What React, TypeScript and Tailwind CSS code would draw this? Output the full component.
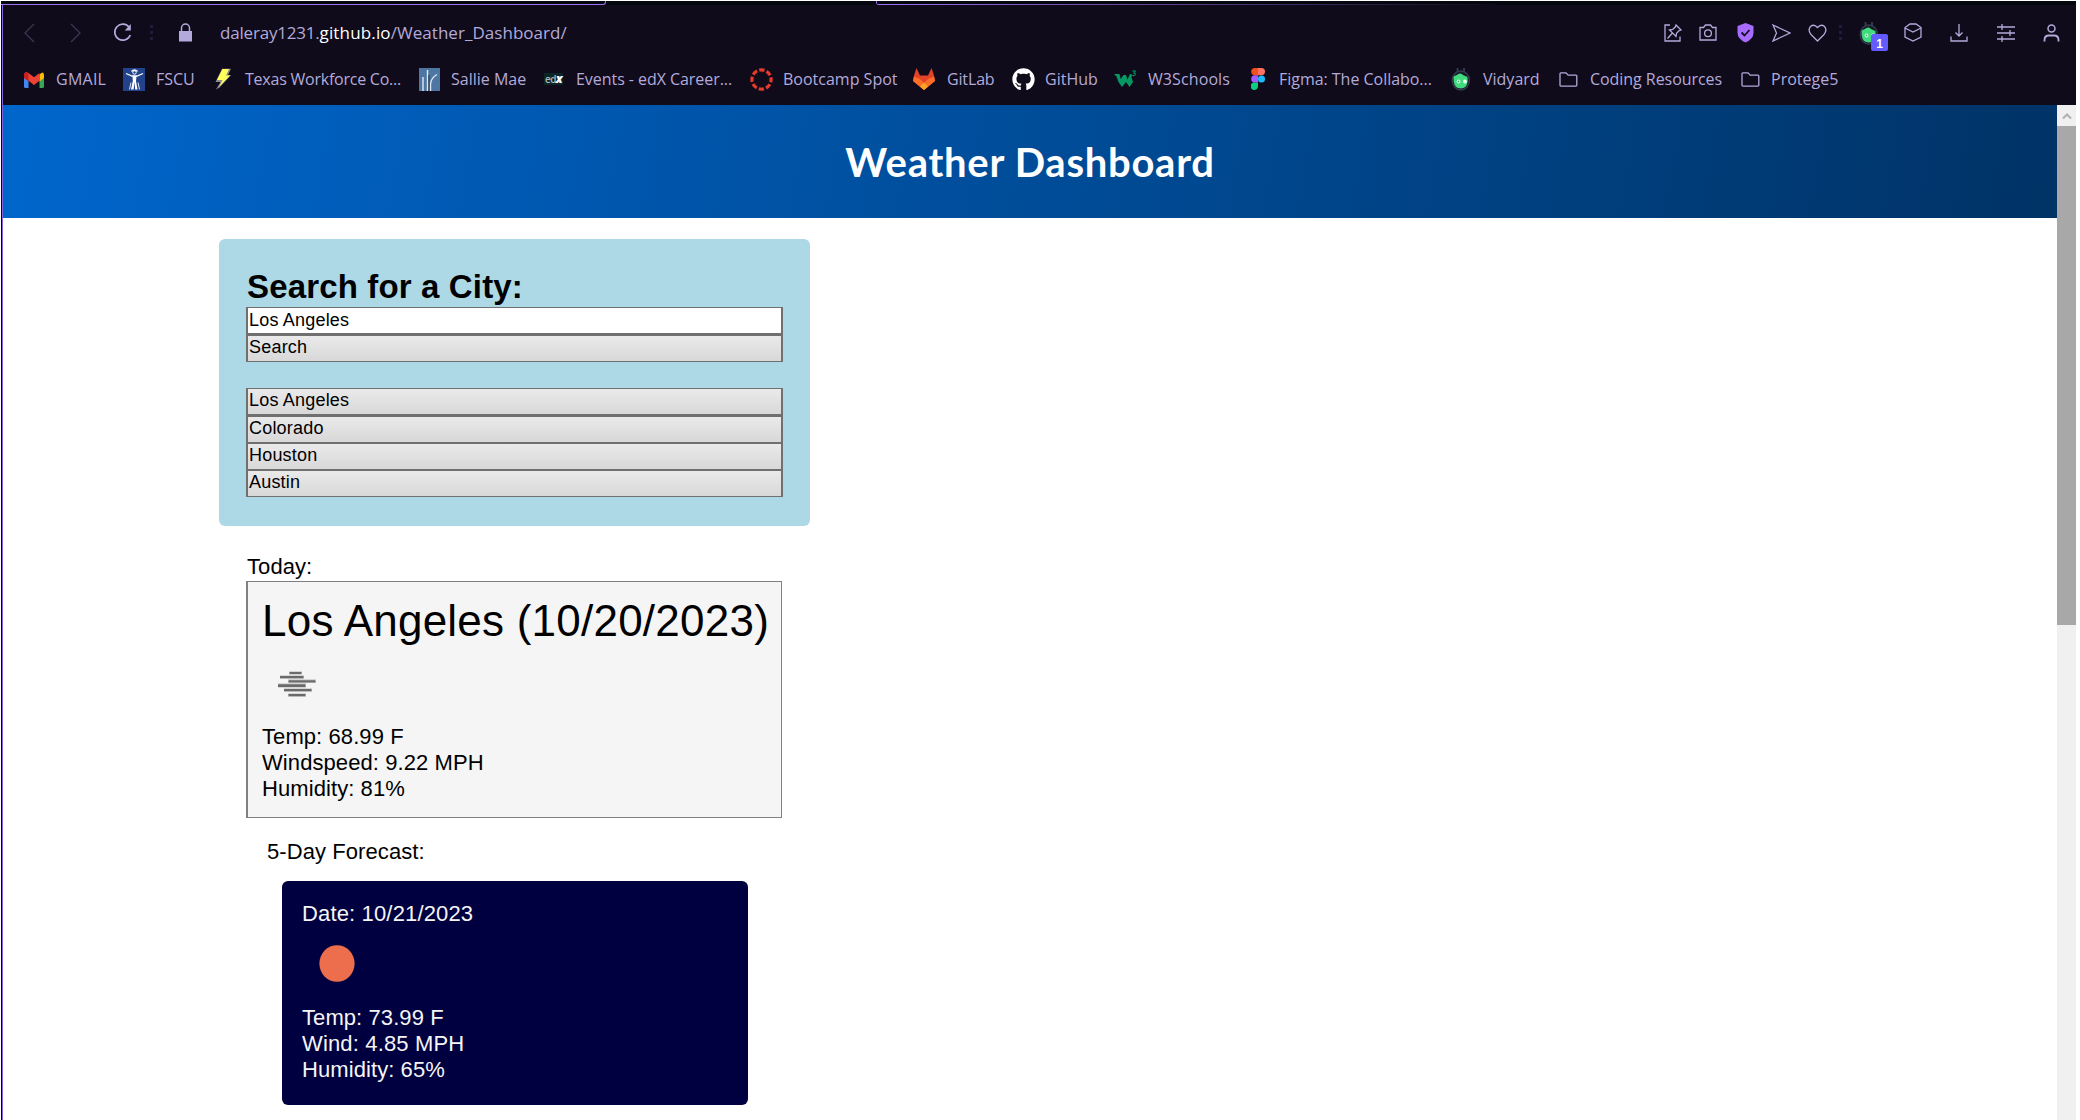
import type { ReactNode } from "react";
import { FaGithub } from "react-icons/fa";

function Icon({ w, h, className = "", children }: { w: number; h: number; className?: string; children: ReactNode }) {
  return (
    <svg width={w} height={h} viewBox={`0 0 ${w} ${h}`} fill="none" stroke="currentColor" strokeWidth="1.3" className={`shrink-0 ${className}`}>
      {children}
    </svg>
  );
}

function Dots({ className }: { className: string }) {
  return (
    <div className={`flex w-[3px] shrink-0 flex-col gap-[3px] ${className}`}>
      <i className="h-[3px] bg-[#221c3c]" />
      <i className="h-[3px] bg-[#221c3c]" />
      <i className="h-[3px] bg-[#221c3c]" />
    </div>
  );
}

function Bug() {
  return (
    <Icon w={20} h={24}>
      <path d="M6.500 1v4M13 1v4" stroke="#3c4359" strokeWidth="1.600" />
      <ellipse cx="9.800" cy="13.500" rx="8.600" ry="9.500" stroke="#363c50" strokeWidth="1.300" fill="#141a26" />
      <path d="M2.500 10q1-1.500 3-1.800 2-2 4.500-1.700 1.500 1.500 6.500 3.500l.2 4.500q-1 7-7 7t-7-7z" fill="#41db7e" stroke="none" />
      <circle cx="7.600" cy="14.500" r="1.900" fill="#c9f7db" stroke="none" />
      <circle cx="14" cy="14.500" r="1.900" fill="#e9fff1" stroke="none" />
      <circle cx="7.600" cy="14.500" r=".8" fill="#2f9e62" stroke="none" />
    </Icon>
  );
}

function Folder() {
  return (
    <Icon w={19} h={15}>
      <path d="M1 13.300V1.700q0-.9.900-.9h5.100l2.200 2.400h7.700q.9 0 .9.900v9.200q0 .8-.9.800H1.900q-.9 0-.9-.8z" />
    </Icon>
  );
}

const bookmarks: { label: string; slot: string; box: string; text?: string; icon: ReactNode }[] = [
  {
    label: "GMAIL", slot: "w-[99px]", box: "w-[32px]", text: "tracking-[0.25px]",
    icon: (
      <Icon w={20} h={16} className="mt-px">
        <path d="M0 3.500h4.500V16H1.500Q0 16 0 14.500z" fill="#4285f4" stroke="none" />
        <path d="M15.500 3.500H20v11q0 1.500-1.500 1.500h-3z" fill="#34a853" stroke="none" />
        <path d="M15.500 2.500q4.500-4.500 4.500 1V6l-4.500 3.500z" fill="#fbbc04" stroke="none" />
        <path d="M0 6V2.500Q.8-1.200 4.500 1L10 5.200 15.500 1v7.800L10 13 4.500 8.800z" fill="#ea4335" stroke="none" />
        <path d="M0 6V2.500Q.8-1.200 4.500 1v8.200z" fill="#c5221f" stroke="none" />
      </Icon>
    ),
  },
  {
    label: "FSCU", slot: "w-[91px]", box: "w-[33px]",
    icon: (
      <Icon w={22} h={23}>
        <path d="M0 0h22v23H0z" fill="#22428c" stroke="none" />
        <circle cx="11.500" cy="4.500" r="1.700" stroke="#fff" strokeWidth="1" />
        <path d="M8.500 3.500q3-3 6 0M3 5.500l6 2.500h5l6-2.500" stroke="#fff" strokeWidth="1.300" />
        <path d="M9.500 8h4l-.5 5 1.500 8.500h-2.300L11.500 14l-.9 7.500H8L9.800 13z" fill="#fff" stroke="none" />
        <path d="M6.500 21.500l1.500-7M16.500 21.500l-1.500-7" stroke="#dfe6f5" strokeWidth="1" />
      </Icon>
    ),
  },
  {
    label: "Texas Workforce Co...", slot: "w-[205px]", box: "w-[31px]", text: "tracking-[-0.23px]",
    icon: (
      <Icon w={18} h={22}>
        <path d="M8 .8h9L14 7h3.200L5.500 19.500 2 21.500 6.500 14H1.500z" fill="#8d8c90" stroke="none" />
        <path d="M8.500 1H15l-3 6.500h4L5 19l3.500-7H3z" fill="#ffff5a" stroke="none" />
      </Icon>
    ),
  },
  {
    label: "Sallie Mae", slot: "w-[125px]", box: "w-[32px]",
    icon: (
      <Icon w={21} h={23}>
        <path d="M0 0h21v23H0z" fill="#4e76a2" stroke="none" />
        <path d="M4 9v14M8.500 2v21M11.500 23V16Q12 10 18 6.500" stroke="#dfe8f2" strokeWidth="1.400" />
        <path d="M10 7v16" stroke="#22303f" strokeWidth="1" />
      </Icon>
    ),
  },
  {
    label: "Events - edX Career...", slot: "w-[206px]", box: "w-[32px]", text: "tracking-[-0.05px]",
    icon: (
      <span className="flex h-[12px] w-[19px] items-center justify-center bg-[#0c2426] font-['Open_Sans'] text-[10px] font-semibold tracking-[-0.6px] text-[#a9bab8]">
        ed<b className="text-[12px] text-white italic">x</b>
      </span>
    ),
  },
  {
    label: "Bootcamp Spot", slot: "w-[163px]", box: "w-[33px]",
    icon: (
      <Icon w={23} h={23}>
        <circle cx="11.500" cy="11.500" r="9.600" stroke="#e63b2c" strokeWidth="3.200" strokeDasharray="5.340 2.200" strokeDashoffset="2.600" />
        <circle cx="11.500" cy="11.500" r="6.600" stroke="#5a1b1d" strokeWidth=".8" strokeDasharray="1 4.200" />
      </Icon>
    ),
  },
  {
    label: "GitLab", slot: "w-[99px]", box: "w-[34px]", text: "tracking-[-0.15px]",
    icon: (
      <Icon w={22} h={22}>
        <path d="M3.500 0L1 7.500 0 13l11 9 11-9-1-5.500L18.500 0 15 7.500H7z" fill="#e24329" stroke="none" />
        <path d="M1 8.500L0 13l11 9 11-9-1-4.500-6 2.500-4 4-4-4z" fill="#fc6d26" stroke="none" />
        <path d="M11 14.500L7 18.500l4 3.500 4-3.500z" fill="#fca326" stroke="none" />
      </Icon>
    ),
  },
  { label: "GitHub", slot: "w-[102px]", box: "w-[33px]", icon: <FaGithub size={23} color="#fff" /> },
  {
    label: "W3Schools", slot: "w-[137px]", box: "w-[34px]", text: "tracking-[0.1px]",
    icon: (
      <Icon w={23} h={18}>
        <path d="M0 4h5.500l1.200 5L9.500 5h2.500l1.500 4.500L16 4l2 .5-.5 3L19 12l-3.500 5-3.500-5-4 5L4.500 12 2.500 6.500z" fill="#059862" stroke="none" />
        <path d="M18.300 1h3L20 3q2 .4 1 2-.9 1-2.700.3" stroke="#059862" strokeWidth="1.100" />
      </Icon>
    ),
  },
  {
    label: "Figma: The Collabo...", slot: "w-[200px]", box: "w-[28px]", text: "tracking-[-0.03px]",
    icon: (
      <Icon w={14} h={22}>
        <path d="M7 0H3.800a3.600 3.600 0 0 0 0 7.200H7z" fill="#f24e1e" stroke="none" />
        <path d="M7 0h3.400a3.600 3.600 0 0 1 0 7.200H7z" fill="#ff7262" stroke="none" />
        <path d="M7 7.300H3.800a3.600 3.600 0 0 0 0 7.200H7z" fill="#a259ff" stroke="none" />
        <circle cx="10.500" cy="10.900" r="3.500" fill="#1abcfe" stroke="none" />
        <path d="M7 14.600H3.800A3.700 3.700 0 1 0 7 18.300z" fill="#0acf83" stroke="none" />
      </Icon>
    ),
  },
  { label: "Vidyard", slot: "w-[108px]", box: "w-[32px]", icon: <Bug /> },
  { label: "Coding Resources", slot: "w-[182px]", box: "w-[31px]", text: "tracking-[-0.05px]", icon: <Folder /> },
  { label: "Protege5", slot: "w-[110px]", box: "w-[30px]", icon: <Folder /> },
];

function AddressBar() {
  return (
    <div className="flex h-[55px] items-center pr-4 pl-[21px] text-[#b3aadb]">
      <Icon w={11} h={20} className="text-[#3c3650]"><path d="M10 1L1 10l9 9" /></Icon>
      <Icon w={11} h={20} className="ml-[35px] text-[#3c3650]"><path d="M1 1l9 9-9 9" /></Icon>
      <Icon w={19} h={19} className="ml-[32px]">
        <path d="M16.300 4.500A8 8 0 1 0 17.300 12" strokeWidth="1.700" />
        <path d="M17.800 1v6.500h-6z" fill="currentColor" stroke="none" />
      </Icon>
      <Dots className="ml-[18px]" />
      <Icon w={13} h={19} className="ml-[26px]">
        <path d="M2.500 9V5a4 4 0 0 1 8 0v4" strokeWidth="1.500" />
        <path d="M0 8h13v10.500H0z" fill="currentColor" stroke="none" />
      </Icon>
      <span className="mt-px ml-[28px] font-['Open_Sans'] text-[17px] whitespace-nowrap">
        <span className="tracking-[-0.2px]">daleray1231.</span>
        <span className="tracking-[0.15px] text-white">github.io</span>
        <span className="tracking-[0.04px]">/Weather_Dashboard/</span>
      </span>
      <div className="ml-auto flex items-center">
        <Icon w={18} h={18}>
          <path d="M6 1H1v16h15v-4.500" />
          <path d="M12 1l5 5-1.800.6-2.700 2.700-.5 3.200L5.500 6l3.200-.5 2.700-2.700zM8.500 9L3.500 14.500" />
        </Icon>
        <Icon w={18} h={17} className="ml-[17px]">
          <path d="M1 3.500h3.500L6.500 1h5l2 2.500H17V16H1z" />
          <circle cx="9" cy="9.300" r="3.400" />
        </Icon>
        <Icon w={17} h={20} className="ml-5">
          <path d="M8.500 0l8 3v6.500q0 6.500-8 10-8-3.500-8-10V3z" fill="#a76cff" stroke="none" />
          <path d="M4.500 9.500l3 3 5-5.500" stroke="#120d20" strokeWidth="1.800" />
        </Icon>
        <Icon w={19} h={18} className="ml-[18px]"><path d="M1 1l17 8-17 8 3.500-8z" /></Icon>
        <Icon w={19} h={18} className="ml-[17px]">
          <path d="M9.500 17L3 10.500Q-.5 6 2.500 2.500q3.500-3 7 1 3.500-4 7-1 3 3.500-.5 8z" />
        </Icon>
        <Dots className="ml-[12px]" />
        <div className="relative ml-[17px] flex">
          <Bug />
          <span className="absolute top-[13px] left-[12px] flex h-[17px] w-[17px] items-center justify-center rounded-[2px] bg-[#635bff] pt-[3px] font-['Liberation_Sans'] text-[12px] font-bold text-white">1</span>
        </div>
        <Icon w={18} h={19} className="ml-[25px]">
          <path d="M6 1h6l5 3.500v9.500L9 18l-8-4V4.500z" />
          <path d="M1 5l8 4 8-4" />
        </Icon>
        <Icon w={18} h={18} className="ml-7 mt-px">
          <path d="M9 0v12M5.500 8.500L9 12l3.500-3.500M1 12.500V17h16v-4.500" />
        </Icon>
        <Icon w={18} h={18} className="ml-[29px]">
          <path d="M0 3h18M0 9h18M0 15h18M5 0v6M13 6v6M5 12v6" />
        </Icon>
        <Icon w={17} h={18} className="ml-[28px]">
          <circle cx="8.500" cy="4.500" r="3.500" strokeWidth="1.500" />
          <path d="M1.500 17.500V16q0-4.500 4.500-4.500h5q4.500 0 4.500 4.500v1.500" strokeWidth="1.800" />
        </Icon>
      </div>
    </div>
  );
}

function BookmarksBar() {
  return (
    <div className="flex h-[38px] items-center pl-[21px] text-[#b3aadb]">
      {bookmarks.map((b) => (
        <div key={b.label} className={`flex shrink-0 items-center ${b.slot}`}>
          <span className={`flex shrink-0 items-center ${b.box}`}>{b.icon}</span>
          <span className={`font-['Open_Sans'] text-[16px] leading-[22px] whitespace-nowrap ${b.text ?? ""}`}>{b.label}</span>
        </div>
      ))}
    </div>
  );
}

const bar = "block w-full border-[#707070] border-x-2 text-left pl-px text-[18px] tracking-[0.2px] text-black";
const grad = "bg-linear-to-b from-[#eaeaea] to-[#d8d8d8] leading-[22px] pb-[3px]";

function SearchPanel() {
  return (
    <section className="h-[287px] w-[591px] rounded-[6px] bg-[#add8e6] px-[27px] pt-[28px]">
      <h2 className="mb-px pl-px text-[33px] leading-[39px] font-bold tracking-[0.15px]">Search for a City:</h2>
      <input defaultValue="Los Angeles" className={`${bar} h-[28px] border-t border-b-2 bg-white leading-[24px]`} />
      <button className={`${bar} ${grad} h-[27px] border-y`}>Search</button>
      <div className="mt-[26px]">
        <button className={`${bar} ${grad} h-[28px] border-t border-b-2`}>Los Angeles</button>
        <button className={`${bar} ${grad} h-[27px] border-y`}>Colorado</button>
        <button className={`${bar} ${grad} h-[27px] border-y`}>Houston</button>
        <button className={`${bar} ${grad} h-[27px] border-y`}>Austin</button>
      </div>
    </section>
  );
}

function Mist() {
  return (
    <svg width="38" height="26" viewBox="0 0 38 26" className="mt-[25px] ml-4">
      <g fill="#d6d6d6">
        <path d="M11 0h13v4H11zM2 4h24v4H2zM10 8h28v4H10zM0 12h28v5H0zM6 17h28v4H6zM10 22h18v4H10z" />
      </g>
      <g fill="#6a6a6a">
        <path d="M11.500 1h12v2h-12zM2 5h23.500v2.200H2zM10.500 9.300h27v2.200h-27zM0 13.300h27.500v2.700H0zM6 18h27.500v2.200H6zM10.500 23h17v2.200h-17z" />
      </g>
    </svg>
  );
}

export default function App() {
  return (
    <div className="h-[1120px] overflow-hidden bg-white font-['Liberation_Sans',sans-serif] text-black">
      <div className="flex h-full w-[2076px] flex-col pt-px pl-px">
        <div className="flex h-[4px] shrink-0 bg-[#04070d]">
          <i className="h-[4px] w-[605px] rounded-br-[3px] border-r border-b border-[#a070f5]" />
          <i className="ml-[270px] h-[4px] w-[620px] rounded-bl-[3px] border-l border-[#a070f5] bg-[linear-gradient(to_right,#a070f5,#0f0b1a)] bg-[length:100%_1px] bg-bottom bg-no-repeat" />
        </div>
        <div className="flex min-h-0 grow border-l border-black">
          <div className="flex grow flex-col border-l border-[#8a5fe0]">
            <div className="h-[100px] shrink-0 bg-[#0f0b1a]">
              <AddressBar />
              <BookmarksBar />
            </div>
            <div className="flex min-h-0 grow">
              <div className="flex w-[2054px] flex-col">
                <header className="flex h-[113px] shrink-0 items-center justify-center bg-[linear-gradient(100deg,#0066cc,#003366)]">
                  <h1 className="font-['Lato'] text-[40px] leading-[48px] font-bold tracking-[0.73px] text-white">Weather Dashboard</h1>
                </header>
                <main className="pt-[21px] pl-[216px]">
                  <SearchPanel />
                  <section className="ml-[27px] w-[536px] pt-[28px] text-[22px] leading-[26px] tracking-[0.08px]">
                    <p className="pl-[1px]">Today:</p>
                    <div className="mt-px h-[237px] border border-l-2 border-[#808080] bg-[#f5f5f5] pl-[14px]">
                      <h2 className="pt-[13px] text-[44px] leading-[51px] tracking-[0.23px] whitespace-nowrap">Los Angeles (10/20/2023)</h2>
                      <Mist />
                      <p className="mt-[27px]">Temp: 68.99 F</p>
                      <p>Windspeed: 9.22 MPH</p>
                      <p>Humidity: 81%</p>
                    </div>
                    <div className="pt-[21px] pl-[21px]">
                      <p>5-Day Forecast:</p>
                      <div className="mt-[16px] ml-[15px] h-[224px] w-[466px] rounded-[6px] bg-[#000040] pt-[20px] pl-5 text-[#f5f5f5]">
                        <p className="tracking-[0.15px]">Date: 10/21/2023</p>
                        <svg width="36" height="37" className="mt-[18px] ml-[17px]">
                          <ellipse cx="18" cy="18.500" rx="17.600" ry="18.300" fill="#ec6e4c" />
                        </svg>
                        <p className="mt-[23px]">Temp: 73.99 F</p>
                        <p className="tracking-[0.15px]">Wind: 4.85 MPH</p>
                        <p>Humidity: 65%</p>
                      </div>
                    </div>
                  </section>
                </main>
              </div>
              <aside className="flex w-[19px] shrink-0 flex-col bg-[#f0f0f0]">
                <span className="flex h-[21px] items-center justify-center text-[#b0b0b0]">
                  <Icon w={10} h={8}><path d="M1 6.500l4-4 4 4" strokeWidth="2" /></Icon>
                </span>
                <span className="h-[499px] bg-[#a8a8a8]" />
              </aside>
            </div>
          </div>
        </div>
      </div>
    </div>
  );
}
